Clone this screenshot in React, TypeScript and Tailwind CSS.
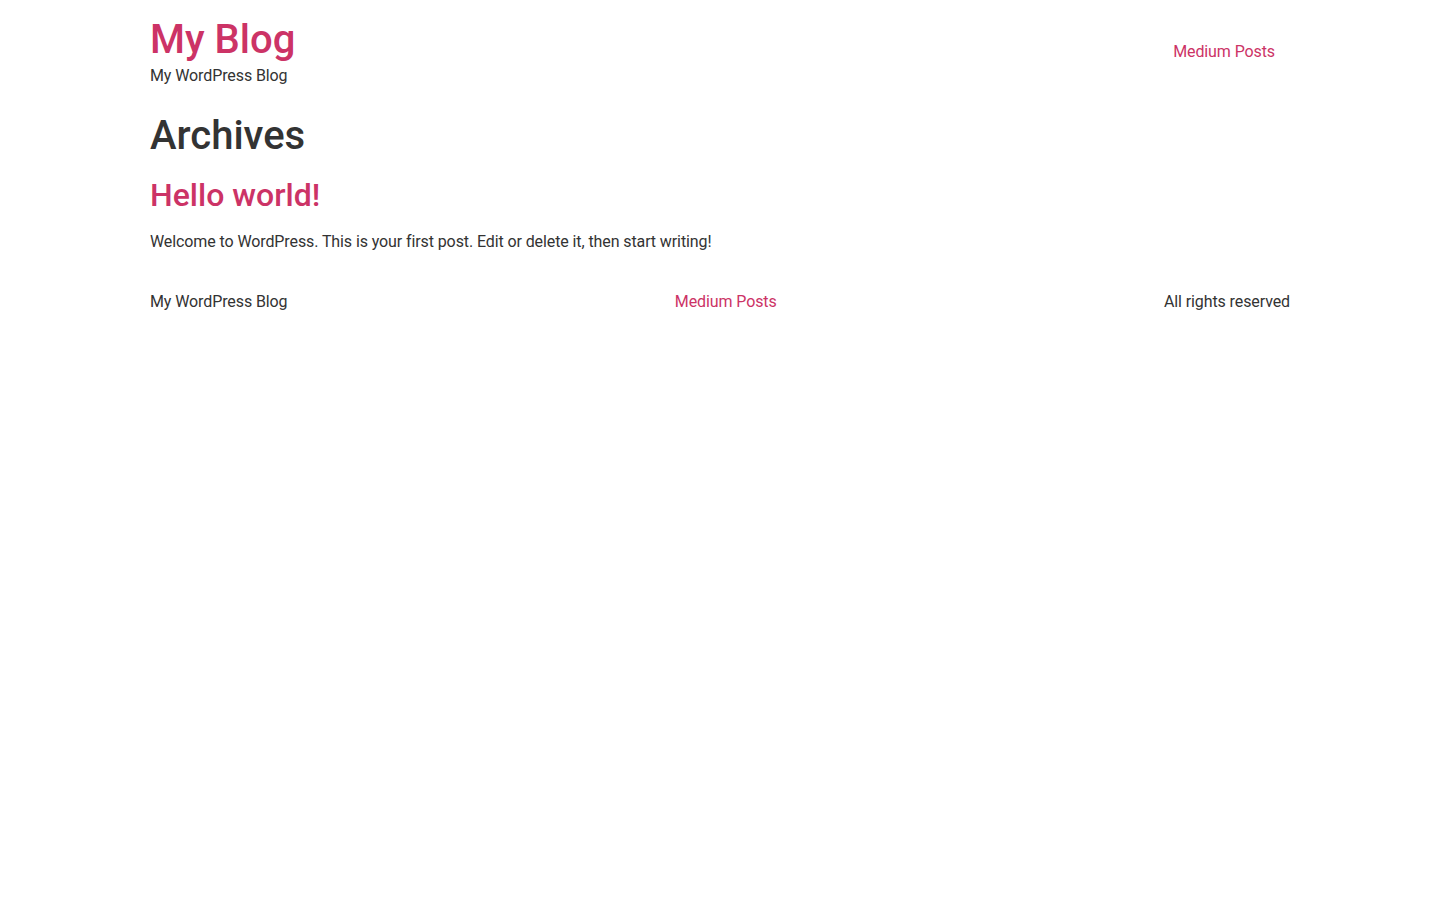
export default function App() {
  return (
    <div className="min-h-screen bg-white text-[#333333] text-base leading-6 tracking-[-0.1px] font-['Roboto',sans-serif]">
      <div className="w-[1140px] mx-auto">
        <header className="flex items-center justify-between py-4">
          <div>
            <h1 className="text-[40px] leading-[48px] font-medium tracking-normal text-[#cc3366]">
              <a href="#">My Blog</a>
            </h1>
            <p>My WordPress Blog</p>
          </div>
          <nav>
            <a href="#" className="block px-[15px] py-[10px] text-[#cc3366]">
              Medium Posts
            </a>
          </nav>
        </header>

        <main>
          <h1 className="mt-[8px] text-[40px] leading-[48px] font-medium tracking-normal">Archives</h1>
          <article>
            <h2 className="mt-[16px] text-[32px] leading-[38px] font-medium tracking-normal text-[#cc3366]">
              <a href="#">Hello world!</a>
            </h2>
            <p className="mt-[16px]">Welcome to WordPress. This is your first post. Edit or delete it, then start writing!</p>
          </article>
        </main>

        <footer className="mt-[26px] flex items-center justify-between">
          <p>My WordPress Blog</p>
          <nav>
            <a href="#" className="block px-[15px] py-[10px] text-[#cc3366]">
              Medium Posts
            </a>
          </nav>
          <p>All rights reserved</p>
        </footer>
      </div>
    </div>
  );
}
